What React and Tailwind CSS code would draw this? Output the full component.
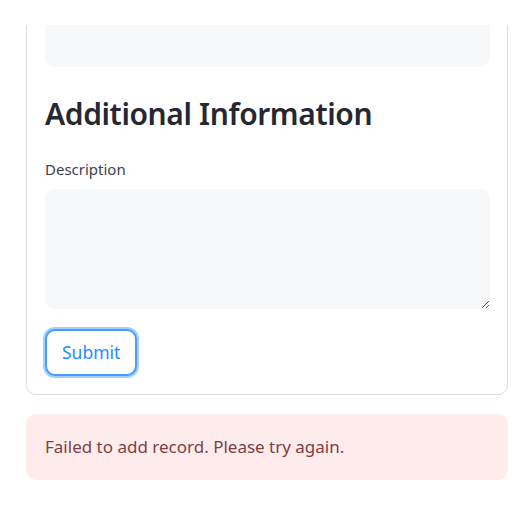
import React from "react";

export default function App() {
  return (
    <div className="w-[519px] h-[529px] bg-white overflow-hidden font-['Noto_Sans',sans-serif]">
      <div className="mt-[25px] ml-[26px] mr-[11px] overflow-hidden">
        <div className="-mt-[20px] border border-[#dcdde0] rounded-[10px] pl-[18px] pr-[17px] pb-[18px]">
          <div className="h-[61px] bg-[#f7f8fa] rounded-[10px]" />
          <h2 className="mt-[28px] text-[30px] font-semibold text-[#262730] leading-[38px] tracking-[-0.4px]">
            Additional Information
          </h2>
          <label className="block mt-[26px] text-[15px] text-[#3d3f4a] leading-[20px]">Description</label>
          <textarea className="block mt-[10px] w-full h-[120px] bg-[#f7f8fa] rounded-[10px] resize-y outline-none" />
          <button className="mt-[20px] h-[47px] px-[15px] border-2 border-[#4a9bff] rounded-[10px] bg-white text-[17.5px] text-[#1f8bff] ring-[2px] ring-[#a3ceff]">
            Submit
          </button>
        </div>
      </div>
      <div className="ml-[26px] mr-[11px] mt-[19px] h-[66px] rounded-[10px] bg-[#feeced] flex items-center px-[19px] text-[17px] text-[#803d43]">
        Failed to add record. Please try again.
      </div>
    </div>
  );
}
